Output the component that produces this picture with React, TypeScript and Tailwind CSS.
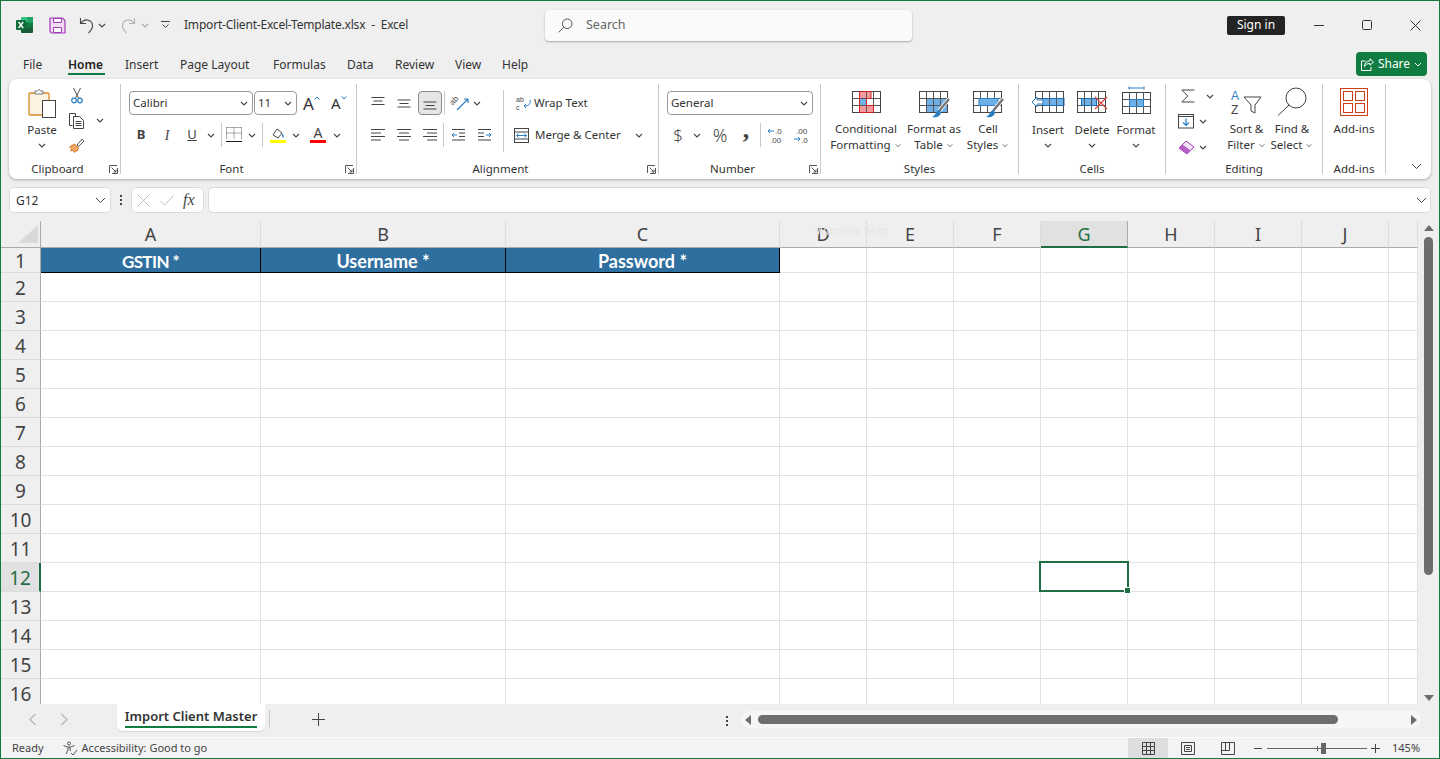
import React from "react";

const Chev = ({ className = "" }: { className?: string }) => (
  <svg width="8" height="5" viewBox="0 0 8 5" className={`shrink-0 ${className}`} fill="none" stroke="#444" strokeWidth="1.1">
    <path d="M1 1l3 3 3-3" />
  </svg>
);

const Sep = ({ className = "" }: { className?: string }) => <div className={`w-px bg-[#c8c8c8] shrink-0 ${className}`} />;

const Launcher = () => (
  <svg width="9" height="9" viewBox="0 0 9 9" className="absolute right-[2px] top-[81px]" fill="none" stroke="#555">
    <path d="M.5 8V.5H8M8.5 3v5.500H3M2.500 2.500l4.500 4.500M7 4.500V7H4.500" />
  </svg>
);

const Group = ({ label, width, launcher, children }: { label: string; width: string; launcher?: boolean; children: React.ReactNode }) => (
  <div className={`relative h-[90px] shrink-0 border-r border-[#c8c8c8] ${width}`}>
    <div className="h-[77px]">{children}</div>
    <div className={launcher ? "h-[16px] pr-[14px] text-center text-[11.5px] leading-[16px] text-[#333]" : "h-[16px] text-center text-[11.5px] leading-[16px] text-[#333]"}>{label}</div>
    {launcher && <Launcher />}
  </div>
);

const Combo = ({ text, className }: { text: string; className: string }) => (
  <div className={`flex h-[24px] items-center justify-between rounded-[4px] border border-[#9a9a9a] bg-white pl-[3px] pr-[4px] text-[11.5px] text-[#333] ${className}`}>
    <span>{text}</span>
    <Chev />
  </div>
);

const AlignIcon = ({ d }: { d: string }) => (
  <svg width="16" height="14" viewBox="0 0 16 14" fill="none" stroke="#444">
    <path d={d} />
  </svg>
);

// worksheet glyph used by the Styles and Cells buttons, fills go between the paper and the lines
const GridBase = ({ w = 28, h = 21, children }: { w?: number; h?: number; children?: React.ReactNode }) => (
  <>
    <rect x=".5" y=".5" width={w} height={h} fill="#fff" />
    {children}
    <rect x=".5" y=".5" width={w} height={h} fill="none" stroke="#444" />
    <path d={`M.5 7.500H${w}M.5 14.500H${w}M7.500 .5V${h}M14.500 .5V${h}M21.500 .5V${h}`} stroke="#555" fill="none" />
  </>
);

const Brush = () => (
  <>
    <path d="M30 8L20 20" stroke="#fff" strokeWidth="4" />
    <path d="M30 8L20 20" stroke="#777" strokeWidth="2.500" />
    <path d="M20 19c-3 1-3 5-7 7 5 1 9-1 9-5z" fill="#2a7fc4" />
  </>
);

const StackBtn = ({ line1, line2, icon, width }: { line1: string; line2: string; icon: React.ReactNode; width: string }) => (
  <div className={`flex shrink-0 flex-col items-center pt-[7px] ${width}`}>
    <div className="flex h-[30px] items-start">{icon}</div>
    <div className="whitespace-nowrap text-center text-[11.5px] leading-[16px] text-[#333]">{line1}</div>
    <div className="flex items-center gap-[3px] whitespace-nowrap text-[11.5px] leading-[16px] text-[#333]">
      {line2}
      <Chev className="scale-75" />
    </div>
  </div>
);

const CellBtn = ({ label, icon }: { label: string; icon: React.ReactNode }) => (
  <div className="flex w-[44px] shrink-0 flex-col items-center">
    <div className="flex h-[38px] items-start pt-[7px]">{icon}</div>
    <div className="text-[11.5px] leading-[16px] text-[#333]">{label}</div>
    <Chev className="mt-[5px]" />
  </div>
);

const columns = ["A", "B", "C", "D", "E", "F", "G", "H", "I", "J", ""];
const rows = Array.from({ length: 15 }, (_, i) => i + 2);
const headers = [
  { text: "GSTIN *", cls: "pt-[3px] text-[17px] tracking-[-0.6px]" },
  { text: "Username *", cls: "pt-[2px] text-[18px]" },
  { text: "Password *", cls: "pt-[2px] text-[18px]" },
];

export default function App() {
  return (
    <div className="h-[759px] w-[1440px] overflow-hidden border border-[#107c41] bg-[#efefef] font-['Noto_Sans',sans-serif] text-[#333]">
      {/* title bar */}
      <div className="relative flex h-[49px] items-center pb-[1px]">
        <svg width="18" height="18" viewBox="0 0 18 18" className="ml-[15px]">
          <rect x="5" y="1" width="12" height="5.500" fill="#33c481" rx="1" />
          <rect x="5" y="6" width="12" height="6" fill="#107c41" />
          <rect x="5" y="11.500" width="12" height="5.500" fill="#185c37" rx="1" />
          <rect x="11" y="1" width="6" height="5.500" fill="#21a366" />
          <rect x="0" y="4" width="10" height="10" fill="#0f6b3a" rx="1" />
          <path d="M2.600 6l4.600 6M7.200 6l-4.600 6" stroke="#fff" strokeWidth="1.400" />
        </svg>
        <svg width="17" height="17" viewBox="0 0 17 17" className="ml-[15px]">
          <path d="M1 1h12.500L16 3.500V16H2.500L1 14.500z" fill="#efdcf3" stroke="#a43ab8" strokeWidth="1.200" />
          <path d="M4.500 1.500h8v4h-8zM4.500 10.500h8V15.500h-8z" fill="#fff" stroke="#a43ab8" />
        </svg>
        <svg width="16" height="17" viewBox="0 0 16 17" className="ml-[13px]" fill="none" stroke="#444" strokeWidth="1.100">
          <path d="M1.500 1v5.500H7M1.500 6.500C4 3.500 6 2.500 8.500 3c3 .6 5 3 5 6 0 2.500-1.500 4.500-4 7" />
        </svg>
        <Chev className="ml-[3px]" />
        <svg width="16" height="17" viewBox="0 0 16 17" className="ml-[14px]" fill="none" stroke="#b2b2b2" strokeWidth="1.100">
          <path d="M14.500 1v5.500H9M14.500 6.500C12 3.500 10 2.500 7.500 3c-3 .6-5 3-5 6 0 2.500 1.500 4.500 4 7" />
        </svg>
        <Chev className="ml-[5px] opacity-40" />
        <svg width="9" height="8" viewBox="0 0 9 8" className="ml-[12px]" fill="none" stroke="#444">
          <path d="M0 .5h9M1.500 3.500L4.500 6.500l3-3" />
        </svg>
        <div className="ml-[14px] whitespace-nowrap text-[12px] tracking-[-0.2px]">Import-Client-Excel-Template.xlsx&nbsp; -&nbsp; Excel</div>
        <div className="absolute left-[544px] top-[9px] flex h-[31px] w-[367px] items-center rounded-[4px] bg-[#fafafa] pl-[13px] text-[12.5px] text-[#666] shadow-[0_1px_2px_rgba(0,0,0,0.3)]">
          <svg width="15" height="15" viewBox="0 0 15 15" fill="none" stroke="#555">
            <circle cx="9.200" cy="5.800" r="4.800" />
            <path d="M5.800 9.200L.7 14.300" />
          </svg>
          <span className="ml-[13px]">Search</span>
        </div>
        <div className="ml-auto flex h-[19px] w-[58px] items-center justify-center rounded-[2px] bg-[#232323] text-[12px] text-white">Sign in</div>
        <svg width="11" height="11" viewBox="0 0 11 11" className="ml-[29px]" fill="none" stroke="#333">
          <path d="M0 5.500h10" />
        </svg>
        <svg width="11" height="11" viewBox="0 0 11 11" className="ml-[37px]" fill="none" stroke="#333">
          <rect x=".5" y=".5" width="9" height="9" rx="1" />
        </svg>
        <svg width="11" height="11" viewBox="0 0 11 11" className="ml-[37px] mr-[18px]" fill="none" stroke="#333">
          <path d="M.5.5l10 10M10.500.5l-10 10" />
        </svg>
      </div>

      {/* tabs */}
      <div className="flex h-[29px] items-start pl-[22px] text-[12px] leading-[30px]">
        <div className="w-[45px]">File</div>
        <div className="relative w-[57px] font-semibold text-[#222]">
          Home
          <div className="absolute left-0 top-[23px] h-[2px] w-[37px] bg-[#107c41]" />
        </div>
        <div className="w-[55px]">Insert</div>
        <div className="w-[93px]">Page Layout</div>
        <div className="w-[74px]">Formulas</div>
        <div className="w-[48px]">Data</div>
        <div className="w-[60px]">Review</div>
        <div className="w-[47px]">View</div>
        <div>Help</div>
        <div className="ml-auto mr-[12px] mt-[2px] flex h-[24px] w-[71px] items-center justify-center gap-[4px] rounded-[4px] bg-[#107c41] leading-[24px] text-white">
          <svg width="13" height="13" viewBox="0 0 13 13" fill="none" stroke="#fff">
            <path d="M9 .8l3.500 3.200L9 7.200V5.500C6 5.500 4.500 6.500 3.500 8.500 3.500 5 5.500 3 9 2.800zM4.500 3H.5v9.500h9.500V9" />
          </svg>
          <span>Share</span>
          <svg width="8" height="5" viewBox="0 0 8 5" fill="none" stroke="#fff">
            <path d="M1 1l3 3 3-3" />
          </svg>
        </div>
      </div>

      {/* ribbon */}
      <div className="relative mx-[8px] flex h-[100px] rounded-[8px] bg-white py-[5px] shadow-[0_1px_3px_rgba(0,0,0,0.3)]">
        <Group label="Clipboard" width="w-[112px]" launcher>
          <div className="flex">
            <div className="ml-[8px] flex w-[50px] flex-col items-center pt-[4px]">
              <svg width="29" height="30" viewBox="0 0 29 30">
                <rect x="1" y="5" width="20" height="22" rx="1" fill="#fdf3e3" stroke="#d68a25" strokeWidth="1.300" />
                <path d="M7 5V3h2.500C10 1 12 1 12.500 3H15v3H7z" fill="#fff" stroke="#777" />
                <rect x="14.500" y="12.500" width="13" height="17" fill="#fff" stroke="#444" />
              </svg>
              <div className="mt-[4px] text-[11.5px] leading-[16px]">Paste</div>
              <Chev className="mt-[5px]" />
            </div>
            <div className="-mt-[1px] flex w-[40px] flex-col">
              <div className="flex h-[25px] w-[20px] items-center justify-center">
                <svg width="12" height="17" viewBox="0 0 12 17" fill="none">
                  <path d="M2.500 1l5 10M9.500 1l-5 10" stroke="#555" />
                  <circle cx="3" cy="13.500" r="2.300" stroke="#2a7fc4" strokeWidth="1.200" />
                  <circle cx="9" cy="13.500" r="2.300" stroke="#2a7fc4" strokeWidth="1.200" />
                </svg>
              </div>
              <div className="flex h-[25px] items-center">
                <div className="flex w-[20px] justify-center">
                  <svg width="16" height="16" viewBox="0 0 16 16" fill="none" stroke="#444">
                    <path d="M3.500 12.500H.5V.5h6v2.500M4.500 3.500h6l4 4V15.500h-10zM6.500 8.500h6M6.500 10.500h6M6.500 12.500h6" />
                  </svg>
                </div>
                <Chev className="ml-[9px]" />
              </div>
              <div className="flex h-[25px] w-[20px] items-center justify-center">
                <svg width="16" height="15" viewBox="0 0 16 15">
                  <path d="M.5 9L3 11 1.500 13 4 12l1.500 2.500L7 12.500l1 .8 1.500-3.300L5.500 6z" fill="#f4a861" stroke="#d4782a" />
                  <path d="M8 7l5-6 2 2-5.500 5.500z" fill="#fff" stroke="#555" />
                </svg>
              </div>
            </div>
          </div>
        </Group>

        <Group label="Font" width="w-[236px]" launcher>
          <div className="flex flex-col gap-[8px] pl-[8px] pt-[7px]">
            <div className="flex items-center">
              <Combo text="Calibri" className="w-[124px]" />
              <Combo text="11" className="ml-[1px] w-[43px]" />
              <div className="ml-[6px] flex w-[27px] items-center text-[17px] leading-none">
                A
                <svg width="6" height="4" viewBox="0 0 6 4" className="mb-[10px]" fill="none" stroke="#2a7fc4"><path d="M.5 3.500L3 1l2.500 2.500" /></svg>
              </div>
              <div className="ml-[1px] flex items-center text-[15px] leading-none">
                A
                <svg width="6" height="4" viewBox="0 0 6 4" className="mb-[10px]" fill="none" stroke="#2a7fc4"><path d="M.5.5L3 3l2.500-2.500" /></svg>
              </div>
            </div>
            <div className="flex h-[24px] items-center">
              <div className="w-[24px] text-center text-[13px] font-bold text-[#444]">B</div>
              <div className="w-[28px] text-center font-['Liberation_Serif',serif] text-[14px] italic text-[#444]">I</div>
              <div className="w-[22px] text-center text-[13px] text-[#444] underline">U</div>
              <div className="flex w-[16px] justify-center"><Chev /></div>
              <Sep className="ml-[2px] h-[24px]" />
              <div className="flex w-[24px] justify-center">
                <svg width="16" height="16" viewBox="0 0 16 16" fill="none" stroke="#555">
                  <path d="M.5.5h15M.5.5v11M15.500.5v11M.5 6h15M8 .5v11" strokeDasharray="1 1" />
                  <path d="M0 14.500h16" stroke="#222" />
                </svg>
              </div>
              <div className="flex w-[12px] justify-center"><Chev /></div>
              <Sep className="ml-[4px] h-[24px]" />
              <div className="ml-[5px] flex w-[20px] justify-center">
                <svg width="16" height="16" viewBox="0 0 16 16">
                  <path d="M3 8l4-6 5 4-4 5z" fill="#fff" stroke="#444" />
                  <path d="M12 6l2 3-1 2-1-2z" fill="#2a7fc4" />
                  <rect x="0" y="13" width="16" height="3" fill="#ffff00" />
                </svg>
              </div>
              <div className="flex w-[16px] justify-center"><Chev /></div>
              <div className="flex w-[28px] flex-col items-center leading-none">
                <span className="text-[14px] leading-[12px] text-[#444]">A</span>
                <div className="mt-[1px] h-[3px] w-[16px] bg-[#ff0000]" />
              </div>
              <div className="flex w-[10px] justify-center"><Chev /></div>
            </div>
          </div>
        </Group>

        <Group label="Alignment" width="w-[302px]" launcher>
          <div className="flex">
            <div className="flex w-[146px] flex-col gap-[8px] pl-[8px] pt-[7px]">
              <div className="flex h-[24px] items-center">
                <div className="flex w-[26px] justify-center"><AlignIcon d="M1.500 1.500h13M3.500 5h9M1.500 8.500h13" /></div>
                <div className="flex w-[26px] justify-center"><AlignIcon d="M1.500 4h13M3.500 7.500h9M1.500 11h13" /></div>
                <div className="ml-[1px] flex h-[24px] w-[24px] items-center justify-center rounded-[4px] border border-[#8a8a8a] bg-[#e6e6e6]"><AlignIcon d="M1.500 6h13M3.500 9.500h9M1.500 13h13" /></div>
                <Sep className="ml-[2px] h-[24px]" />
                <div className="ml-[6px] flex w-[20px] justify-center">
                  <svg width="18" height="16" viewBox="0 0 18 16" fill="none" className="overflow-visible">
                    <text x="0" y="9" fontSize="8" fill="#444" fontFamily="Liberation Sans" transform="rotate(-45 2 9)">ab</text>
                    <path d="M5 15L16 4M16 4h-4M16 4v4" stroke="#2a7fc4" strokeWidth="1.200" />
                  </svg>
                </div>
                <Chev className="ml-[2px]" />
              </div>
              <div className="flex h-[24px] items-center">
                <div className="flex w-[26px] justify-center"><AlignIcon d="M1 1.500h14M1 5h10M1 8.500h14M1 12h10" /></div>
                <div className="flex w-[26px] justify-center"><AlignIcon d="M1 1.500h14M3 5h10M1 8.500h14M3 12h10" /></div>
                <div className="flex w-[26px] justify-center"><AlignIcon d="M1 1.500h14M5 5h10M1 8.500h14M5 12h10" /></div>
                <Sep className="h-[24px]" />
                <div className="flex w-[28px] justify-center">
                  <svg width="15" height="14" viewBox="0 0 15 14" fill="none">
                    <path d="M1 1.500h13M8 5h6M8 8.500h6M1 12h13" stroke="#444" />
                    <path d="M6 7H1M3 5L1 7l2 2" stroke="#2a7fc4" />
                  </svg>
                </div>
                <div className="flex w-[24px] justify-center">
                  <svg width="15" height="14" viewBox="0 0 15 14" fill="none">
                    <path d="M1 1.500h13M1 5h6M1 8.500h6M1 12h13" stroke="#444" />
                    <path d="M9 7h5M12 5l2 2-2 2" stroke="#2a7fc4" />
                  </svg>
                </div>
              </div>
            </div>
            <Sep className="mt-[6px] h-[62px]" />
            <div className="flex flex-col gap-[8px] pl-[10px] pt-[7px] text-[11.5px]">
              <div className="flex h-[24px] items-center pl-[2px]">
                <svg width="15" height="17" viewBox="0 0 15 17" fill="none" className="overflow-visible">
                  <text x="0" y="7" fontSize="7" fill="#444" fontFamily="Liberation Sans">ab</text>
                  <text x="0" y="15" fontSize="7" fill="#444" fontFamily="Liberation Sans">c</text>
                  <path d="M14 5c1 4-1 6-6 6M10 9l-2 2 2 2" stroke="#2a7fc4" />
                </svg>
                <span className="ml-[3px]">Wrap Text</span>
              </div>
              <div className="flex h-[24px] items-center">
                <svg width="15" height="15" viewBox="0 0 15 15" fill="none">
                  <rect x=".5" y=".5" width="14" height="14" stroke="#444" />
                  <path d="M.5 4h14M.5 11h14" stroke="#444" />
                  <path d="M2.500 7.500h10M4.500 5.500l-2 2 2 2M10.500 5.500l2 2-2 2" stroke="#2a7fc4" />
                </svg>
                <span className="ml-[6px] w-[100px] whitespace-nowrap">Merge &amp; Center</span>
                <Chev />
              </div>
            </div>
          </div>
        </Group>

        <Group label="Number" width="w-[162px]" launcher>
          <div className="flex flex-col gap-[8px] pl-[8px] pt-[7px]">
            <Combo text="General" className="w-[146px]" />
            <div className="flex h-[24px] items-center text-[#444]">
              <div className="w-[22px] text-center text-[17px] font-light">$</div>
              <div className="flex w-[16px] justify-center"><Chev /></div>
              <div className="w-[30px] text-center text-[18px] font-light">%</div>
              <div className="-mt-[10px] w-[22px] text-center font-['Liberation_Serif',serif] text-[26px] font-bold leading-[18px]">,</div>
              <Sep className="ml-[3px] h-[24px]" />
              <div className="flex w-[28px] justify-center">
                <svg width="17" height="16" viewBox="0 0 17 16" fill="none" className="overflow-visible">
                  <path d="M7 4H1M3 2L1 4l2 2" stroke="#2a7fc4" />
                  <text x="8" y="7" fontSize="8" fill="#444" fontFamily="Liberation Sans">.0</text>
                  <text x="3" y="15.500" fontSize="8" fill="#444" fontFamily="Liberation Sans">.00</text>
                </svg>
              </div>
              <div className="flex w-[24px] justify-center">
                <svg width="17" height="16" viewBox="0 0 17 16" fill="none" className="overflow-visible">
                  <text x="3" y="7" fontSize="8" fill="#444" fontFamily="Liberation Sans">.00</text>
                  <path d="M1 12h6M5 10l2 2-2 2" stroke="#2a7fc4" />
                  <text x="8" y="15.500" fontSize="8" fill="#444" fontFamily="Liberation Sans">.0</text>
                </svg>
              </div>
            </div>
          </div>
        </Group>

        <Group label="Styles" width="w-[198px]">
          <div className="flex">
            <StackBtn
              line1="Conditional"
              line2="Formatting"
              width="w-[90px]"
              icon={
                <svg width="29" height="23" viewBox="0 0 29 23">
                  <GridBase>
                    <rect x="7" y="0" width="12" height="7.500" fill="#f79aa0" />
                    <rect x="7" y="7.500" width="8" height="7" fill="#6fb0e6" />
                    <rect x="7" y="14.500" width="15" height="7" fill="#f79aa0" />
                  </GridBase>
                  <path d="M7.500 .5h11.500v7h-4.500v7h7v7H7.500z" fill="none" stroke="#d42020" />
                </svg>
              }
            />
            <StackBtn
              line1="Format as"
              line2="Table"
              width="w-[46px]"
              icon={
                <svg width="31" height="27" viewBox="0 0 31 27">
                  <GridBase>
                    <rect x="7" y="7.500" width="21" height="14" fill="#6fb0e6" />
                  </GridBase>
                  <Brush />
                </svg>
              }
            />
            <StackBtn
              line1="Cell"
              line2="Styles"
              width="w-[62px]"
              icon={
                <svg width="31" height="27" viewBox="0 0 31 27">
                  <GridBase>
                    <rect x="6" y="7.500" width="18" height="7" fill="#6fb0e6" />
                  </GridBase>
                  <rect x="6" y="7.500" width="19" height="7" fill="#6fb0e6" />
                  <rect x="6" y="7.500" width="19" height="7" fill="none" stroke="#2a7fc4" />
                  <Brush />
                </svg>
              }
            />
          </div>
        </Group>

        <Group label="Cells" width="w-[147px]">
          <div className="flex pl-[7px]">
            <CellBtn
              label="Insert"
              icon={
                <svg width="33" height="23" viewBox="0 0 33 23">
                  <g transform="translate(3 0)">
                    <GridBase>
                      <rect x="7" y="7.500" width="22" height="7" fill="#6fb0e6" />
                    </GridBase>
                  </g>
                  <rect x="10.500" y="7.500" width="21.500" height="7" fill="none" stroke="#1a6bb5" />
                  <path d="M11 9H5V6L0 11l5 5v-3h6z" fill="#fff" stroke="#2a7fc4" />
                </svg>
              }
            />
            <CellBtn
              label="Delete"
              icon={
                <svg width="31" height="23" viewBox="0 0 31 23">
                  <GridBase>
                    <rect x="4" y="7.500" width="16" height="7" fill="#6fb0e6" />
                  </GridBase>
                  <rect x="4.500" y="7.500" width="15" height="7" fill="none" stroke="#1a6bb5" />
                  <path d="M18 6l12 12M30 6L18 18" stroke="#e0443c" strokeWidth="1.200" />
                </svg>
              }
            />
            <CellBtn
              label="Format"
              icon={
                <svg width="29" height="28" viewBox="0 0 29 28" className="-mt-[5px]">
                  <path d="M7 2h15M7 .5v3M22 .5v3" stroke="#2a7fc4" fill="none" />
                  <g transform="translate(0 6)">
                    <GridBase>
                      <rect x="7" y="7.500" width="15" height="7" fill="#6fb0e6" />
                    </GridBase>
                  </g>
                  <rect x="7.500" y="13.500" width="14" height="7" fill="none" stroke="#2a7fc4" />
                </svg>
              }
            />
          </div>
        </Group>

        <Group label="Editing" width="w-[157px]">
          <div className="flex">
            <div className="flex w-[58px] shrink-0 flex-col pl-[12px]">
              <div className="flex h-[24px] items-center">
                <svg width="14" height="14" viewBox="0 0 14 14" fill="none" stroke="#444" className="ml-[3px]">
                  <path d="M13.500 1H.8l6 6-6 6h12.700" />
                </svg>
                <Chev className="ml-[11px]" />
              </div>
              <div className="flex h-[26px] items-center">
                <svg width="17" height="15" viewBox="0 0 17 15" fill="none">
                  <rect x=".5" y=".5" width="15" height="13.500" fill="#fff" stroke="#444" />
                  <path d="M.5 2.500h15" stroke="#444" />
                  <path d="M8 4.500v7M5 8.500l3 3 3-3" stroke="#2a7fc4" strokeWidth="1.200" />
                </svg>
                <Chev className="ml-[4px]" />
              </div>
              <div className="flex h-[26px] items-center">
                <svg width="17" height="15" viewBox="0 0 17 15">
                  <path d="M1 8l7-7 8 6-7 7z" fill="#f3e3f6" stroke="#a43ab8" />
                  <path d="M1 8l3.500-3.500 8 6L9 14z" fill="#b55ec7" />
                </svg>
                <Chev className="ml-[4px]" />
              </div>
            </div>
            <StackBtn
              line1="Sort &"
              line2="Filter"
              width="w-[45px]"
              icon={
                <svg width="31" height="27" viewBox="0 0 31 27" fill="none" className="-mt-[2px] overflow-visible">
                  <text x="0" y="11" fontSize="12" fill="#2a7fc4" fontFamily="Liberation Sans">A</text>
                  <text x="0" y="25" fontSize="12" fill="#444" fontFamily="Liberation Sans">Z</text>
                  <path d="M13 8h17l-6 8v8l-4-2v-6z" stroke="#444" />
                </svg>
              }
            />
            <StackBtn
              line1="Find &"
              line2="Select"
              width="w-[46px]"
              icon={
                <svg width="30" height="29" viewBox="0 0 30 29" fill="none" stroke="#444" className="-mt-[4px]">
                  <circle cx="19" cy="11" r="10" />
                  <path d="M12 18L1 28.500" />
                </svg>
              }
            />
          </div>
        </Group>

        <Group label="Add-ins" width="w-[63px]">
          <div className="flex flex-col items-center pt-[4px]">
            <svg width="29" height="28" viewBox="0 0 29 28" fill="none" stroke="#d13f1a">
              <rect x=".5" y=".5" width="27" height="27" />
              <rect x="3.500" y="3.500" width="9" height="9" />
              <rect x="15.500" y="3.500" width="9" height="9" />
              <rect x="3.500" y="15.500" width="9" height="9" />
              <rect x="15.500" y="15.500" width="9" height="9" />
            </svg>
            <div className="mt-[5px] text-[11.5px] leading-[16px]">Add-ins</div>
          </div>
        </Group>

        <svg width="11" height="7" viewBox="0 0 11 7" className="absolute bottom-[9px] right-[9px]" fill="none" stroke="#444">
          <path d="M1 1l4.500 4.500L10 1" />
        </svg>
      </div>

      {/* formula bar */}
      <div className="mx-[8px] mt-[8px] flex h-[26px] items-center">
        <div className="flex h-full w-[102px] items-center justify-between rounded-[5px] border border-[#dcdcdc] bg-white pl-[6px] pr-[4px] pt-[1px] text-[12px]">
          <span>G12</span>
          <svg width="11" height="7" viewBox="0 0 11 7" fill="none" stroke="#444"><path d="M1 1l4.500 4.500L10 1" /></svg>
        </div>
        <div className="ml-[9px] flex w-[3px] flex-col gap-[2px]">
          <div className="h-[2px] w-[2px] bg-[#444]" />
          <div className="h-[2px] w-[2px] bg-[#444]" />
          <div className="h-[2px] w-[2px] bg-[#444]" />
        </div>
        <div className="ml-[8px] flex h-full w-[73px] items-center rounded-[5px] border border-[#dcdcdc] bg-white pl-[5px]">
          <svg width="13" height="13" viewBox="0 0 13 13" fill="none" stroke="#bdbdbd"><path d="M.5.5l12 12M12.500.5l-12 12" /></svg>
          <svg width="14" height="11" viewBox="0 0 14 11" fill="none" stroke="#bdbdbd" className="ml-[10px]"><path d="M.5 6l4 4L13.500.5" /></svg>
          <span className="ml-[9px] font-['Liberation_Serif',serif] text-[16px] italic text-[#444]">fx</span>
        </div>
        <div className="ml-[4px] flex h-full flex-1 items-center justify-end rounded-[5px] border border-[#dcdcdc] bg-white pr-[3px]">
          <svg width="11" height="7" viewBox="0 0 11 7" fill="none" stroke="#444"><path d="M1 1l4.500 4.500L10 1" /></svg>
        </div>
      </div>

      {/* sheet */}
      <div className="mt-[8px] flex h-[483px]">
        <div className="grid h-full w-[1417px] grid-cols-[40px_220px_245px_274px_repeat(7,87px)_29px] grid-rows-[27px_25px_repeat(15,29px)] overflow-hidden bg-white">
          <div className="flex items-center justify-center border-b border-r border-[#ababab] bg-[#efefef]">
            <svg width="38" height="27" viewBox="0 0 38 27"><path d="M16 22L36 4v18z" fill="#d9d9d9" /></svg>
          </div>
          {columns.map((c) => (
            <div
              key={c || "K"}
              className={
                c === "G"
                  ? "flex items-center justify-center border-b-2 border-r border-[#1f6e43] border-r-[#ababab] bg-[#e1e1e1] pt-[1px] text-[18px] text-[#1f6e43]"
                  : c === "D"
                    ? "relative flex items-center justify-center border-b border-r border-[#ababab] border-r-[#dcdcdc] bg-[#efefef] pt-[1px] text-[18px] text-[#444]"
                    : "flex items-center justify-center border-b border-r border-[#ababab] border-r-[#dcdcdc] bg-[#efefef] pt-[1px] text-[18px] text-[#444]"
              }
            >
              {c}
              {c === "D" && <span className="absolute left-[35px] top-[1px] whitespace-nowrap text-[12px] text-[#e6e6e6]">Window Snip</span>}
            </div>
          ))}

          <div className="flex items-center justify-center border-b border-r border-[#ababab] border-b-[#dcdcdc] bg-[#efefef] pt-[3px] text-[19px] leading-none text-[#444]">1</div>
          {columns.map((c, i) =>
            i < 3 ? (
              <div key={c} className={`flex items-center justify-center border-b border-r border-black bg-[#2f6f9f] font-['Lato',sans-serif] font-bold text-white ${headers[i].cls}`}>
                {headers[i].text}
              </div>
            ) : (
              <div key={c || "K"} className="border-b border-r border-[#e1e1e1]" />
            ),
          )}

          {rows.map((r) => (
            <React.Fragment key={r}>
              <div
                className={
                  r === 12
                    ? "flex items-center justify-center border-b border-r-2 border-b-[#dcdcdc] border-r-[#1f6e43] bg-[#e1e1e1] pt-[3px] text-[19px] leading-none text-[#1f6e43]"
                    : "flex items-center justify-center border-b border-r border-b-[#dcdcdc] border-r-[#ababab] bg-[#efefef] pt-[3px] text-[19px] leading-none text-[#444]"
                }
              >
                {r}
              </div>
              {columns.map((c) => (
                <div key={c || "K"} className={r === 12 && c === "G" ? "relative border-b border-r border-[#e1e1e1]" : "border-b border-r border-[#e1e1e1]"}>
                  {r === 12 && c === "G" && (
                    <div className="absolute left-[-2px] top-[-2px] z-10 h-[31px] w-[90px] border-2 border-[#1f6e43]">
                      <div className="absolute bottom-[-4px] right-[-4px] h-[7px] w-[7px] border border-white bg-[#1f6e43]" />
                    </div>
                  )}
                </div>
              ))}
            </React.Fragment>
          ))}
        </div>
        <div className="relative flex w-[21px] flex-col items-center justify-between bg-[#efefef] pb-[2px] pt-[3px]">
          <svg width="12" height="8" viewBox="0 0 12 8"><path d="M6 1l5 6H1z" fill="#6d6d6d" /></svg>
          <div className="absolute left-[6px] top-[16px] h-[338px] w-[9px] rounded-full bg-[#6d6d6d]" />
          <svg width="12" height="8" viewBox="0 0 12 8"><path d="M6 7L1 1h10z" fill="#6d6d6d" /></svg>
        </div>
      </div>

      {/* sheet tabs + horizontal scrollbar */}
      <div className="flex h-[33px] items-start">
        <div className="flex h-[30px] w-[116px] items-center pl-[27px]">
          <svg width="9" height="13" viewBox="0 0 9 13" fill="none" stroke="#b5b5b5" strokeWidth="1.200"><path d="M7.500 1L2 6.500 7.500 12" /></svg>
          <svg width="9" height="13" viewBox="0 0 9 13" fill="none" stroke="#b5b5b5" strokeWidth="1.200" className="ml-[23px]"><path d="M1.500 1L7 6.500 1.500 12" /></svg>
        </div>
        <div className="flex h-[27px] w-[148px] flex-col items-center rounded-b-[6px] bg-white pt-[3px] shadow-[0_1px_1px_rgba(0,0,0,0.1)]">
          <div className="border-b-2 border-[#107c41] text-[13px] font-semibold leading-[19px] text-[#333]">Import Client Master</div>
        </div>
        <Sep className="ml-[4px] mt-[6px] h-[18px]" />
        <svg width="13" height="13" viewBox="0 0 13 13" className="ml-[42px] mt-[9px]" fill="none" stroke="#444"><path d="M6.500 0v13M0 6.500h13" /></svg>
        <div className="ml-[401px] mt-[12px] flex w-[3px] flex-col gap-[2px]">
          <div className="h-[2px] w-[2px] bg-[#444]" />
          <div className="h-[2px] w-[2px] bg-[#444]" />
          <div className="h-[2px] w-[2px] bg-[#444]" />
        </div>
        <div className="ml-[12px] mt-[7px] flex h-[17px] w-[680px] items-center rounded-full bg-[#f6f6f6] pl-[3px] pr-[3px]">
          <svg width="8" height="12" viewBox="0 0 8 12"><path d="M1 6l6-5v10z" fill="#6d6d6d" /></svg>
          <div className="ml-[6px] h-[9px] w-[580px] rounded-full bg-[#6d6d6d]" />
          <svg width="8" height="12" viewBox="0 0 8 12" className="ml-auto"><path d="M7 6L1 1v10z" fill="#6d6d6d" /></svg>
        </div>
      </div>

      {/* status bar */}
      <div className="flex h-[21px] items-center border-t border-[#fbfbfb] bg-[#f3f3f3] pl-[11px] text-[11px] text-[#444]">
        <span>Ready</span>
        <svg width="15" height="15" viewBox="0 0 15 15" className="ml-[19px]" fill="none" stroke="#555">
          <circle cx="6" cy="2.500" r="1.500" />
          <path d="M.5 4.500l4 1.500h3l4-1.500M5 6v3l-2 4M7 6v3l1 1M8 12l2 2 4-5" />
        </svg>
        <span className="ml-[4px]">Accessibility: Good to go</span>
        <div className="ml-auto flex h-full items-center">
          <div className="flex h-full w-[40px] items-center justify-center bg-[#dedede]">
            <svg width="13" height="13" viewBox="0 0 13 13" fill="none" stroke="#444"><path d="M.5.5h12v12H.5zM4.500.5v12M8.500.5v12M.5 4.500h12M.5 8.500h12" /></svg>
          </div>
          <div className="flex w-[40px] justify-center">
            <svg width="14" height="13" viewBox="0 0 14 13" fill="none" stroke="#444"><path d="M.5.5h13v12H.5zM3.500 3.500h7v6h-7zM5 5.500h4M5 7.500h4" /></svg>
          </div>
          <div className="flex w-[40px] justify-center">
            <svg width="14" height="13" viewBox="0 0 14 13" fill="none" stroke="#444"><path d="M.5.5h13v12H.5zM.5 8.500h8V.5M4.500.5v8" /></svg>
          </div>
          <svg width="8" height="1" viewBox="0 0 8 1" className="ml-[6px]" stroke="#444"><path d="M0 .5h8" /></svg>
          <div className="relative ml-[5px] h-px w-[100px] bg-[#666]">
            <div className="absolute left-[50px] top-[-2px] h-[5px] w-px bg-[#666]" />
            <div className="absolute left-[54px] top-[-5px] h-[11px] w-[5px] bg-[#666]" />
          </div>
          <svg width="9" height="9" viewBox="0 0 9 9" className="ml-[4px]" stroke="#444"><path d="M4.500 0v9M0 4.500h9" /></svg>
          <span className="ml-[12px] mr-[19px] w-[28px] text-right">145%</span>
        </div>
      </div>
    </div>
  );
}
